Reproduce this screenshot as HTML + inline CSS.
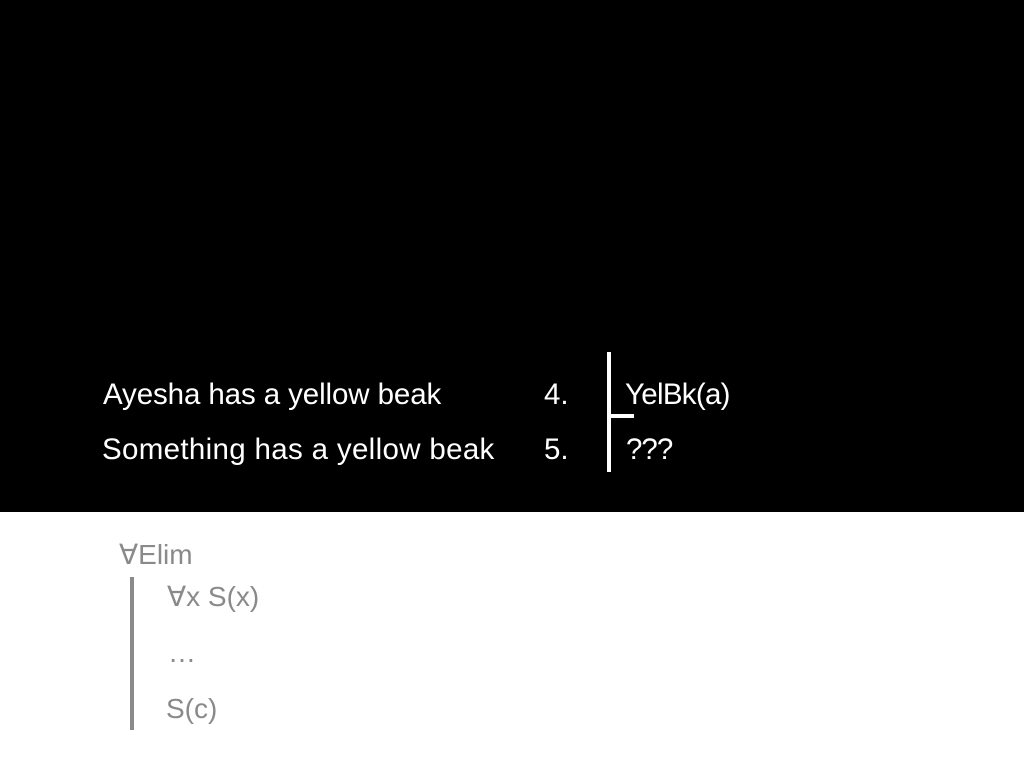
<!DOCTYPE html>
<html><head><style>
body{margin:0;width:1024px;height:768px;background:#fff;position:relative;overflow:hidden;font-family:"Liberation Sans",sans-serif}
.blk{position:absolute;left:0;top:0;width:1024px;height:512px;background:#000}
.t{position:absolute;white-space:nowrap;font-size:29.5px;line-height:1;color:#fff}
.g{color:#8a8a8a;font-size:28px}
.bar{position:absolute;background:#fff}
</style></head><body>
<div class="blk"></div>
<div class="t" style="left:103px;top:380px;letter-spacing:-0.1px">Ayesha has a yellow beak</div>
<div class="t" style="left:102px;top:435px;letter-spacing:0.33px">Something has a yellow beak</div>
<div class="t" style="left:544px;top:380px">4.</div>
<div class="t" style="left:544px;top:435px">5.</div>
<div class="t" style="left:625px;top:380px;letter-spacing:-0.7px">YelBk(a)</div>
<div class="t" style="left:626px;top:435px;letter-spacing:-1px">???</div>
<div class="bar" style="left:607px;top:352px;width:4px;height:120px"></div>
<div class="bar" style="left:611px;top:414px;width:23px;height:4px"></div>
<div class="t g" style="left:119px;top:541px">∀Elim</div>
<div class="t g" style="left:167px;top:583px">∀x S(x)</div>
<div class="t g" style="left:168px;top:639px">…</div>
<div class="t g" style="left:166px;top:695px">S(c)</div>
<div class="bar" style="left:130px;top:577px;width:4px;height:153px;background:#8a8a8a"></div>
</body></html>
